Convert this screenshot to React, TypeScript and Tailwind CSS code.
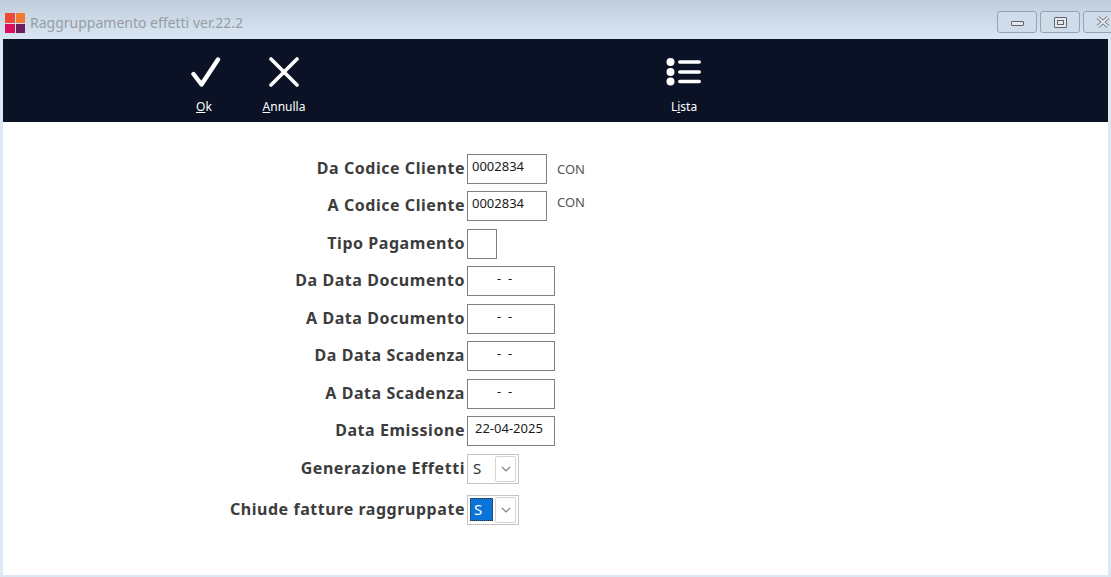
import React from "react";

function Chevron() {
  return (
    <svg width="10" height="6" viewBox="0 0 10 6" fill="none" stroke="#7a7a7a" strokeWidth="1.1">
      <path d="M1 1l4 4 4-4" />
    </svg>
  );
}

function ToolButton({ icon, pre, u, post, w }: { icon: React.ReactNode; pre: string; u: string; post: string; w: string }) {
  return (
    <div className={`flex flex-col items-center ${w}`}>
      <div className="flex h-[48px] items-end justify-center">{icon}</div>
      <div className="mt-[13px] text-[12px] leading-[14px] text-white font-['Noto_Sans',sans-serif]">
        {pre}
        <span className="underline">{u}</span>
        {post}
      </div>
    </div>
  );
}

function Row({ label, h = "h-[37.5px]", children }: { label: string; h?: string; children: React.ReactNode }) {
  return (
    <div className={`flex items-start ${h}`}>
      <div className="w-[462px] pt-[4px] text-right text-[16px] font-bold leading-[21px] tracking-[0.55px] text-[#3c3c3c] font-['Noto_Sans',sans-serif] whitespace-nowrap">
        {label}
      </div>
      <div className="ml-[2px] flex items-start">{children}</div>
    </div>
  );
}

function Box({ w, children, pl = "pl-[4px]" }: { w: string; children?: React.ReactNode; pl?: string }) {
  return (
    <div
      className={`flex h-[30px] ${w} ${pl} items-start whitespace-pre border border-[#808080] bg-white pt-[3px] text-[13px] leading-[16px] text-[#1a1a1a] font-['Noto_Sans',sans-serif]`}
    >
      {children}
    </div>
  );
}

function Combo({ selected }: { selected?: boolean }) {
  return (
    <div className="flex h-[30px] w-[52px] items-center border border-[#c4c4c4] bg-white pl-[2px]">
      <div
        className={`flex h-[23px] w-[23px] items-center pl-[3px] text-[15px] leading-[19px] font-['Noto_Sans',sans-serif] ${
          selected ? "border border-dotted border-[#3a2a10] bg-[#0a74da] text-white" : "text-[#333333]"
        }`}
      >
        S
      </div>
      <div className="ml-[2px] flex h-[26px] w-[21px] items-center justify-center rounded-[2px] border border-[#d4d4d4] bg-white">
        <Chevron />
      </div>
    </div>
  );
}

function Con({ pt }: { pt: string }) {
  return (
    <div className={`ml-[10px] text-[13px] leading-[16px] text-[#555555] font-['Noto_Sans',sans-serif] ${pt}`}>CON</div>
  );
}

export default function App() {
  return (
    <div className="flex h-[577px] w-[1111px] flex-col overflow-hidden bg-[#dce8f3] font-['Noto_Sans',sans-serif]">
      <div className="flex h-[39px] shrink-0 items-start bg-gradient-to-b from-[#c0cddb] to-[#d9e6f3] pl-[5px] pt-[13px]">
        <div className="grid h-[20px] w-[20px] grid-cols-2 gap-[1px]">
          <div className="bg-[#ee4a35]" />
          <div className="bg-[#f47a30]" />
          <div className="bg-[#dc0e5e]" />
          <div className="bg-[#6b1f5f]" />
        </div>
        <div className="ml-[5px] text-[14px] leading-[20px] text-[#979da4] whitespace-nowrap">Raggruppamento effetti ver.22.2</div>
        <div className="ml-auto -mt-[2px] flex shrink-0 translate-x-[12px] gap-[3px]">
          <div className="flex h-[22px] w-[40px] items-center justify-center rounded-[3px] border border-[#95a3b3] bg-[#cfdcea]">
            <div className="mt-[3px] h-[5px] w-[13px] rounded-[1px] border border-[#5d6670] bg-[#e8e8e8]" />
          </div>
          <div className="flex h-[22px] w-[40px] items-center justify-center rounded-[3px] border border-[#95a3b3] bg-[#cfdcea]">
            <div className="flex h-[11px] w-[13px] items-center justify-center rounded-[1px] border border-[#5d6670] bg-[#e8e8e8]">
              <div className="h-[5px] w-[7px] border border-[#5d6670]" />
            </div>
          </div>
          <div className="flex h-[22px] w-[40px] items-center justify-start rounded-[3px] border border-[#95a3b3] bg-[#cfdcea] pl-[12px]">
            <svg width="14" height="12" viewBox="0 0 14 12" fill="none">
              <path d="M2 1.5l10 9M12 1.5l-10 9" stroke="#5d6670" strokeWidth="3.6" />
              <path d="M2 1.5l10 9M12 1.5l-10 9" stroke="#ececec" strokeWidth="2" />
            </svg>
          </div>
        </div>
      </div>

      <div className="mx-[3px] mb-[2px] flex min-h-0 flex-1 flex-col bg-white">
        <div className="flex h-[83px] shrink-0 bg-[#0c1226]">
          <div className="ml-[171px] flex">
            <ToolButton
              w="w-[60px]"
              pre=""
              u="O"
              post="k"
              icon={
                <svg width="34" height="30" viewBox="0 0 34 30" fill="none" stroke="#fff" strokeWidth="4.4" strokeLinecap="round" strokeLinejoin="round">
                  <path d="M6.5 17l8 10.5L31 2.5" />
                </svg>
              }
            />
            <ToolButton
              w="w-[100px]"
              pre=""
              u="A"
              post="nnulla"
              icon={
                <svg width="30" height="30" viewBox="0 0 30 30" fill="none" stroke="#fff" strokeWidth="3.6" strokeLinecap="round">
                  <path d="M2 2l26 26M28 2L2 28" />
                </svg>
              }
            />
          </div>
          <div className="ml-[320px]">
            <ToolButton
              w="w-[60px]"
              pre="L"
              u="i"
              post="sta"
              icon={
                <svg width="36" height="30" viewBox="0 0 36 30" fill="#fff">
                  <circle cx="4.5" cy="5" r="4" />
                  <circle cx="4.5" cy="15" r="4" />
                  <circle cx="4.5" cy="24.5" r="4" />
                  <rect x="12" y="3.2" width="23" height="3.6" rx="1.8" />
                  <rect x="12" y="13.2" width="23" height="3.6" rx="1.8" />
                  <rect x="12" y="22.7" width="23" height="3.6" rx="1.8" />
                </svg>
              }
            />
          </div>
        </div>

        <div className="flex flex-col pt-[31.5px]">
          <Row label="Da Codice Cliente"><Box w="w-[80px]">0002834</Box><Con pt="pt-[7px]" /></Row>
          <Row label="A Codice Cliente"><Box w="w-[80px]">0002834</Box><Con pt="pt-[3px]" /></Row>
          <Row label="Tipo Pagamento"><Box w="w-[30px]" /></Row>
          <Row label="Da Data Documento"><Box w="w-[88px]" pl="pl-[29px]">{"-  -"}</Box></Row>
          <Row label="A Data Documento"><Box w="w-[88px]" pl="pl-[29px]">{"-  -"}</Box></Row>
          <Row label="Da Data Scadenza"><Box w="w-[88px]" pl="pl-[29px]">{"-  -"}</Box></Row>
          <Row label="A Data Scadenza"><Box w="w-[88px]" pl="pl-[29px]">{"-  -"}</Box></Row>
          <Row label="Data Emissione"><Box w="w-[88px]" pl="pl-[7px]">22-04-2025</Box></Row>
          <Row label="Generazione Effetti" h="h-[41px]"><Combo /></Row>
          <Row label="Chiude fatture raggruppate"><Combo selected /></Row>
        </div>
      </div>
    </div>
  );
}
